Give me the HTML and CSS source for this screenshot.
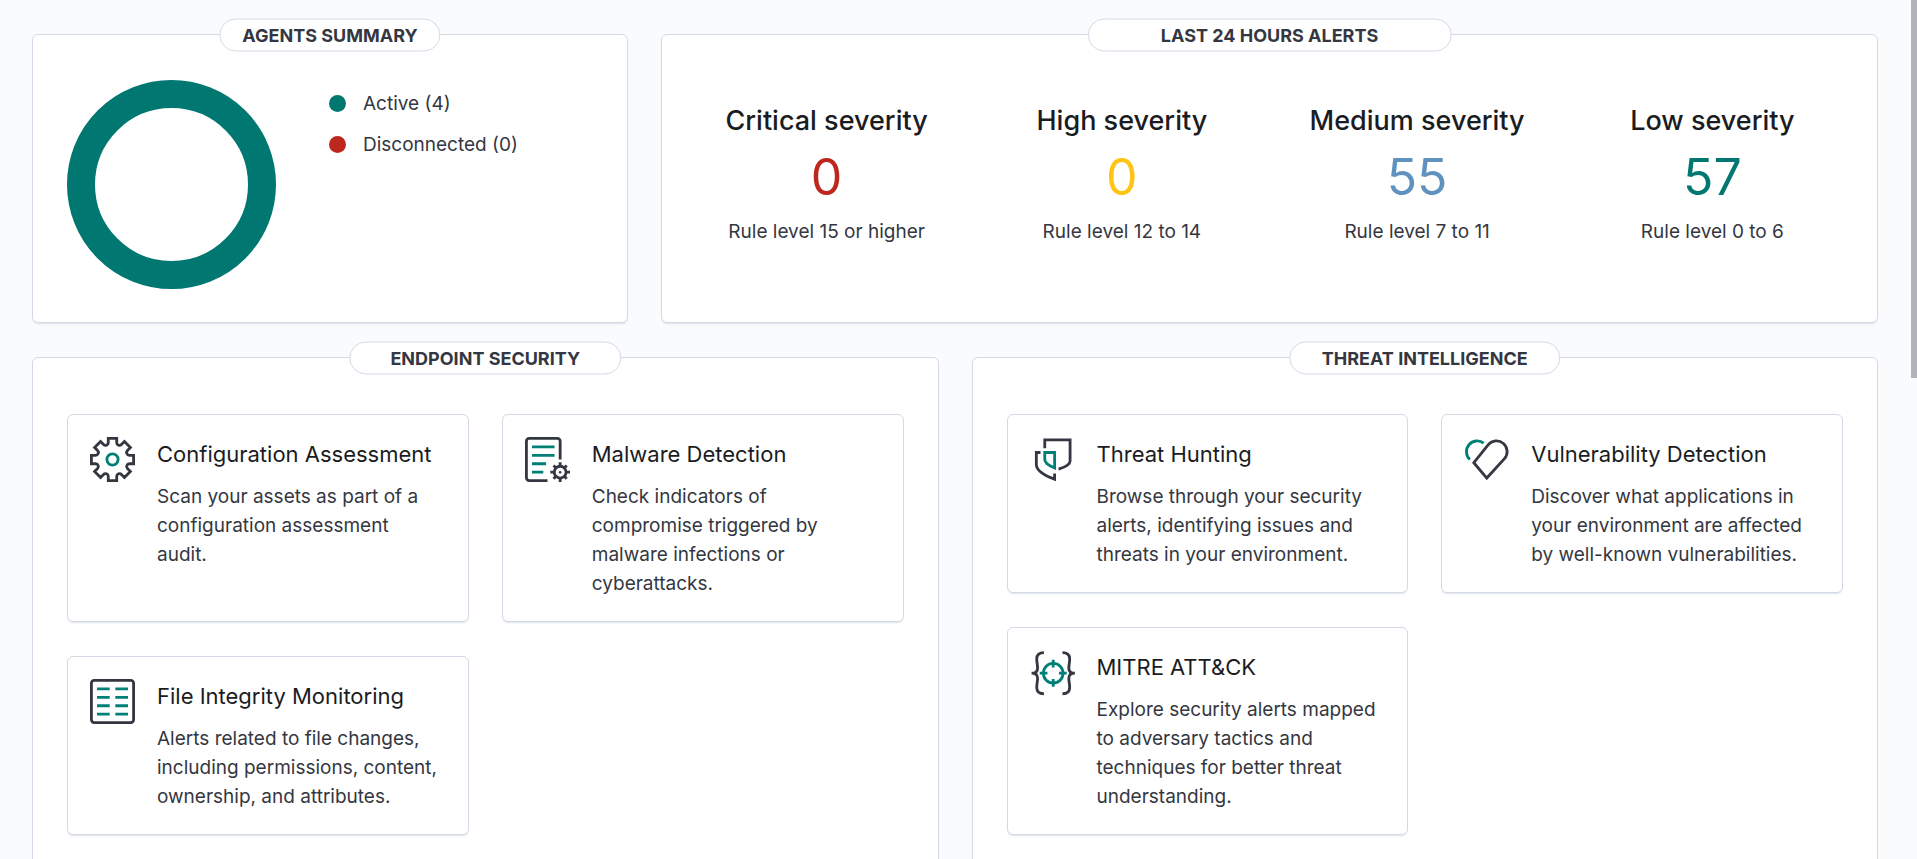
FILE: index.html
```html
<!DOCTYPE html>
<html lang="en">
<head>
<meta charset="utf-8">
<title>Overview</title>
<link rel="stylesheet" href="styles.css">
</head>
<body>
<main class="page">
  <div class="row row-summary">
    <section class="panel panel-agents">
      <h2 class="pill">Agents summary</h2>
      <svg class="donut" viewBox="0 0 209 209" role="img" aria-label="Agents by status">
        <circle cx="104.5" cy="104.5" r="90.5" fill="none" stroke="#007871" stroke-width="28"/>
      </svg>
      <ul class="legend">
        <li class="legend-item"><span class="dot dot-active"></span>Active (4)</li>
        <li class="legend-item"><span class="dot dot-disconnected"></span>Disconnected (0)</li>
      </ul>
    </section>

    <section class="panel panel-alerts">
      <h2 class="pill">Last 24 hours alerts</h2>
      <div class="stat">
        <h3 class="stat-title">Critical severity</h3>
        <a class="stat-value critical" href="#critical">0</a>
        <p class="stat-note">Rule level 15 or higher</p>
      </div>
      <div class="stat">
        <h3 class="stat-title">High severity</h3>
        <a class="stat-value high" href="#high">0</a>
        <p class="stat-note">Rule level 12 to 14</p>
      </div>
      <div class="stat">
        <h3 class="stat-title">Medium severity</h3>
        <a class="stat-value medium" href="#medium">55</a>
        <p class="stat-note">Rule level 7 to 11</p>
      </div>
      <div class="stat">
        <h3 class="stat-title">Low severity</h3>
        <a class="stat-value low" href="#low">57</a>
        <p class="stat-note">Rule level 0 to 6</p>
      </div>
    </section>
  </div>

  <div class="row row-apps">
    <section class="panel panel-apps">
      <h2 class="pill">Endpoint security</h2>
      <a class="card" href="#configuration-assessment">
        <svg class="icon" viewBox="0 0 32 32" aria-hidden="true">
          <path d="M13 4V1h6v3A1.97 1.97 0 0 0 22.36 5.39L24.49 3.27 28.73 7.51 26.61 9.64A1.97 1.97 0 0 0 28 13H31V19H28A1.97 1.97 0 0 0 26.61 22.36L28.73 24.49 24.49 28.73 22.36 26.61A1.97 1.97 0 0 0 19 28V31H13V28A1.97 1.97 0 0 0 9.64 26.61L7.51 28.73 3.27 24.49 5.39 22.36A1.97 1.97 0 0 0 4 19H1V13H4A1.97 1.97 0 0 0 5.39 9.64L3.27 7.51 7.51 3.27 9.64 5.39A1.97 1.97 0 0 0 13 4Z"/>
          <circle class="accent" cx="16" cy="16" r="4"/>
        </svg>
        <div class="card-body">
          <h3 class="card-title">Configuration Assessment</h3>
          <p class="card-text">Scan your assets as part of a configuration assessment audit.</p>
        </div>
      </a>
      <a class="card" href="#malware-detection">
        <svg class="icon" viewBox="0 0 32 32" aria-hidden="true">
          <path d="M25 16V3a2 2 0 0 0-2-2H3a2 2 0 0 0-2 2v26a2 2 0 0 0 2 2h13"/>
          <path class="accent" d="M5 7h16M5 13h16M5 19h10M5 25h8"/>
          <circle cx="25" cy="25" r="4.2"/>
          <circle class="solid" cx="25" cy="25" r="0.9"/>
          <path d="M25 20.5V18M25 29.500V32M20.500 25H18M29.500 25H32M21.900 21.900l-1.600-1.600M28.100 21.900l1.600-1.600M21.900 28.100l-1.600 1.600M28.100 28.100l1.600 1.600"/>
        </svg>
        <div class="card-body">
          <h3 class="card-title">Malware Detection</h3>
          <p class="card-text">Check indicators of compromise triggered by malware infections or cyberattacks.</p>
        </div>
      </a>
      <a class="card" href="#file-integrity-monitoring">
        <svg class="icon" viewBox="0 0 32 32" aria-hidden="true">
          <rect x="1" y="1" width="30" height="30" rx="2"/>
          <path class="accent" d="M5 7h9M5 13h9M5 19h9M5 25h9M18 7h9M18 13h9M18 19h9M18 25h9"/>
        </svg>
        <div class="card-body">
          <h3 class="card-title">File Integrity Monitoring</h3>
          <p class="card-text">Alerts related to file changes, including permissions, content, ownership, and attributes.</p>
        </div>
      </a>
    </section>

    <section class="panel panel-apps">
      <h2 class="pill">Threat intelligence</h2>
      <a class="card" href="#threat-hunting">
        <svg class="icon" viewBox="0 0 32 32" aria-hidden="true">
          <path d="M10.500 8V2h18v15c0 2.500-3 4.200-8.200 5.800"/>
          <path d="M7.500 11H4.500v8.500c0 4 5 7.500 13 10.500v-4"/>
          <path class="accent" d="M10.500 11h7v11c-4-1.600-7-3.200-7-6z"/>
        </svg>
        <div class="card-body">
          <h3 class="card-title">Threat Hunting</h3>
          <p class="card-text">Browse through your security alerts, identifying issues and threats in your environment.</p>
        </div>
      </a>
      <a class="card" href="#vulnerability-detection">
        <svg class="icon" viewBox="0 0 32 32" aria-hidden="true">
          <path d="M7 18.300 16.200 29.200 28.800 15.400A7.600 7.600 0 0 0 17.300 5.400Z"/>
          <path class="accent" d="M4.200 16A7.600 7.600 0 0 1 14 4.400"/>
        </svg>
        <div class="card-body">
          <h3 class="card-title">Vulnerability Detection</h3>
          <p class="card-text">Discover what applications in your environment are affected by well-known vulnerabilities.</p>
        </div>
      </a>
      <a class="card" href="#mitre-attack">
        <svg class="icon" viewBox="0 0 32 32" aria-hidden="true">
          <g transform="translate(-0.6 -0.6)">
            <path d="M10.500 2.500C7 2.500 5.400 4 5.400 7c0 3 .6 4 .6 6.500 0 2.300-1 3.600-4.300 3.600 3.300 0 4.300 1.300 4.300 3.600 0 2.500-.6 3.500-.6 6.500 0 3 1.600 4.500 5.100 4.500"/>
            <path d="M23.700 2.500c3.500 0 5.100 1.500 5.100 4.500 0 3-.6 4-.6 6.500 0 2.300 1 3.600 4.300 3.600-3.300 0-4.300 1.300-4.300 3.600 0 2.500.6 3.500.6 6.500 0 3-1.600 4.500-5.100 4.500"/>
            <circle class="accent" cx="17.100" cy="17.100" r="7"/>
            <path class="accent" d="M17.100 7.500v5.500M17.100 21.200v5.500M7.500 17.100h5.500M21.200 17.100h5.500"/>
          </g>
        </svg>
        <div class="card-body">
          <h3 class="card-title">MITRE ATT&amp;CK</h3>
          <p class="card-text">Explore security alerts mapped to adversary tactics and techniques for better threat understanding.</p>
        </div>
      </a>
    </section>
  </div>
</main>
<div class="scroll-thumb"></div>
</body>
</html>
```
FILE: styles.css
```css
* {
  box-sizing: border-box;
}

body {
  margin: 0;
  height: 100vh;
  overflow: hidden;
  background: #fafbfd;
  color: #343741;
  font-family: Inter, "Liberation Sans", sans-serif;
  font-size: 19px;
  line-height: 29px;
}

h2, h3, p, ul {
  margin: 0;
  padding: 0;
}

a {
  color: inherit;
  text-decoration: none;
}

.page {
  display: flex;
  flex-direction: column;
  gap: 34px;
  height: 100vh;
  overflow: hidden;
  padding: 34px 39px 0 32px;
}

.row {
  display: grid;
  flex: none;
  column-gap: 33px;
}

.row-summary {
  grid-template-columns: 596fr 1217fr;
}

.row-apps {
  grid-template-columns: 1fr 1fr;
}

.panel {
  position: relative;
  background: #fff;
  border: 1px solid #d3dae6;
  border-radius: 6px;
  box-shadow: 0 2px 2px -1px rgba(152, 162, 179, 0.3);
}

.pill {
  position: absolute;
  top: 0;
  left: 50%;
  transform: translate(-50%, -50%);
  min-width: 30%;
  padding: 0 22px;
  background: #fff;
  border: 1px solid #d3dae6;
  border-radius: 17px;
  font-size: 18px;
  font-weight: 700;
  line-height: 31px;
  text-align: center;
  text-transform: uppercase;
  white-space: nowrap;
}

.panel-agents {
  display: flex;
  gap: 53px;
  padding: 45px 34px 33px;
}

.donut {
  width: 209px;
  height: 209px;
}

.legend {
  display: flex;
  flex-direction: column;
  gap: 12px;
  padding-top: 9px;
  list-style: none;
}

.legend-item {
  display: flex;
  align-items: center;
  gap: 17px;
}

.dot {
  width: 17px;
  height: 17px;
  border-radius: 50%;
}

.dot-active {
  background: #007871;
}

.dot-disconnected {
  background: #bd271e;
}

.panel-alerts {
  display: grid;
  grid-template-columns: repeat(4, 1fr);
  padding: 69px 17px 0;
}

.stat {
  display: flex;
  flex-direction: column;
  align-items: center;
}

.stat-title {
  color: #1a1c21;
  font-size: 27px;
  font-weight: 500;
  line-height: 34px;
}

.stat-value {
  margin: 11px 0 12px;
  font-size: 50px;
  line-height: 56px;
}

.critical {
  color: #bd271e;
}

.high {
  color: #fec514;
}

.medium {
  color: #6092c0;
}

.low {
  color: #007871;
}

.panel-apps {
  display: grid;
  grid-template-columns: 1fr 1fr;
  gap: 34px 33px;
  align-content: start;
  padding: 56px 34px 34px;
}

.card {
  display: flex;
  gap: 22px;
  padding: 22px 26px 23px 22px;
  background: #fff;
  border: 1px solid #d3dae6;
  border-radius: 6px;
  box-shadow: 0 2px 2px -1px rgba(152, 162, 179, 0.3);
}

.icon {
  flex: none;
  width: 45px;
  height: 45px;
  overflow: visible;
  fill: none;
  stroke: #343741;
  stroke-width: 2;
}

.icon .accent {
  stroke: #007f75;
}

.icon .solid {
  fill: #343741;
  stroke: none;
}

.card-body {
  flex: 1;
  min-width: 0;
}

.card-title {
  margin-bottom: 11px;
  color: #1a1c21;
  font-size: 22px;
  font-weight: 400;
  line-height: 34px;
}

.scroll-thumb {
  position: fixed;
  top: 0;
  right: 0;
  width: 6px;
  height: 44vh;
  background: #b0b3bd;
}
```
